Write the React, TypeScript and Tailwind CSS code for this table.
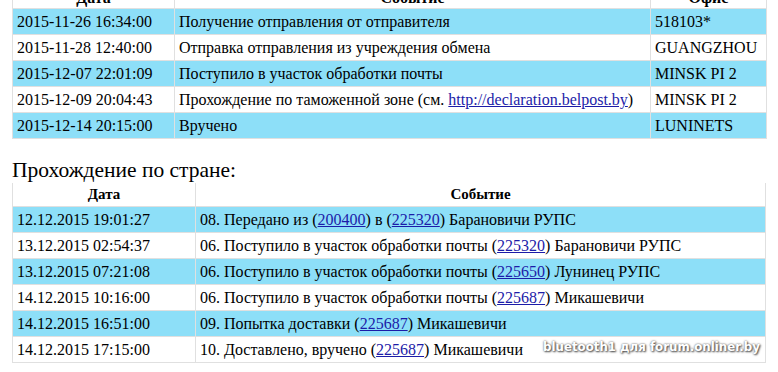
import React from "react";

const top = [
  { d: "2015-11-26 16:34:00", e: "Получение отправления от отправителя", o: "518103*" },
  { d: "2015-11-28 12:40:00", e: "Отправка отправления из учреждения обмена", o: "GUANGZHOU" },
  { d: "2015-12-07 22:01:09", e: "Поступило в участок обработки почты", o: "MINSK PI 2" },
  { d: "2015-12-09 20:04:43", e: "customs", o: "MINSK PI 2" },
  { d: "2015-12-14 20:15:00", e: "Вручено", o: "LUNINETS" },
];

const local = [
  { d: "12.12.2015 19:01:27", pre: "08. Передано из (", links: ["200400", "225320"], post: ") Барановичи РУПС" },
  { d: "13.12.2015 02:54:37", pre: "06. Поступило в участок обработки почты (", links: ["225320"], post: ") Барановичи РУПС" },
  { d: "13.12.2015 07:21:08", pre: "06. Поступило в участок обработки почты (", links: ["225650"], post: ") Лунинец РУПС" },
  { d: "14.12.2015 10:16:00", pre: "06. Поступило в участок обработки почты (", links: ["225687"], post: ") Микашевичи" },
  { d: "14.12.2015 16:51:00", pre: "09. Попытка доставки (", links: ["225687"], post: ") Микашевичи" },
  { d: "14.12.2015 17:15:00", pre: "10. Доставлено, вручено (", links: ["225687"], post: ") Микашевичи" },
];

const A = ({ children }: { children: React.ReactNode }) => (
  <a href="#" className="text-[#1c1ca8] underline">
    {children}
  </a>
);

const cell = "border border-[#e0e0e0] px-[4px] h-[26px] whitespace-nowrap";

export default function App() {
  return (
    <div className="relative w-[778px] h-[372px] overflow-hidden bg-white text-black font-[family-name:'Liberation_Serif',serif] text-[16px] leading-[19px]">
      <div className="pl-[12px] -mt-[15px]">
        <table className="border-collapse w-[754px] table-fixed">
          <colgroup>
            <col className="w-[162px]" />
            <col className="w-[476px]" />
            <col className="w-[116px]" />
          </colgroup>
          <thead>
            <tr>
              <th className="border border-[#e0e0e0] h-[23px] font-bold">Дата</th>
              <th className="border border-[#e0e0e0] h-[23px] font-bold">Событие</th>
              <th className="border border-[#e0e0e0] h-[23px] font-bold">Офис</th>
            </tr>
          </thead>
          <tbody>
            {top.map((r, i) => (
              <tr key={i} className={i % 2 === 0 ? "bg-[#8ddff8]" : "bg-white"}>
                <td className={cell}>{r.d}</td>
                <td className={cell}>
                  {r.e === "customs" ? (
                    <>
                      Прохождение по таможенной зоне (см. <A>http://declaration.belpost.by</A>)
                    </>
                  ) : (
                    r.e
                  )}
                </td>
                <td className={cell}>{r.o}</td>
              </tr>
            ))}
          </tbody>
        </table>

        <h2 className="mt-[18px] text-[21.5px] leading-[26px] font-normal">Прохождение по стране:</h2>

        <table className="border-collapse w-[754px] table-fixed">
          <colgroup>
            <col className="w-[183px]" />
            <col />
          </colgroup>
          <thead>
            <tr>
              <th className="border border-[#e0e0e0] border-t-0 h-[23px] font-bold text-[15px]">Дата</th>
              <th className="border border-[#e0e0e0] border-t-0 h-[23px] font-bold text-[15px]">Событие</th>
            </tr>
          </thead>
          <tbody>
            {local.map((r, i) => (
              <tr key={i} className={i % 2 === 0 ? "bg-[#8ddff8]" : "bg-white"}>
                <td className={cell}>{r.d}</td>
                <td className={cell}>
                  {r.links.length === 2 ? (
                    <>
                      {r.pre}
                      <A>{r.links[0]}</A>) в (<A>{r.links[1]}</A>
                      {r.post}
                    </>
                  ) : (
                    <>
                      {r.pre}
                      <A>{r.links[0]}</A>
                      {r.post}
                    </>
                  )}
                </td>
              </tr>
            ))}
          </tbody>
        </table>
      </div>

      <div className="absolute left-[543px] top-[339px] font-[family-name:'DejaVu_Sans',sans-serif] font-bold text-[11.8px] leading-[16px] text-white [text-shadow:0_0_2px_#555,1px_1px_2px_#444]">
        bluetooth1 для forum.onliner.by
      </div>
    </div>
  );
}
